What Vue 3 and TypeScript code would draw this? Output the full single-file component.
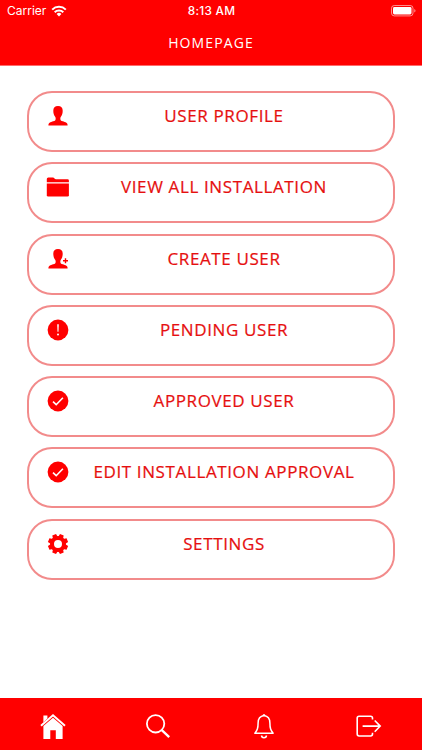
<script setup lang="ts">
type IconName = 'person' | 'folder' | 'personAdd' | 'alert' | 'check' | 'gear'

interface MenuItem {
  label: string
  icon: IconName
}

const items: MenuItem[] = [
  { label: 'USER PROFILE', icon: 'person' },
  { label: 'VIEW ALL INSTALLATION', icon: 'folder' },
  { label: 'CREATE USER', icon: 'personAdd' },
  { label: 'PENDING USER', icon: 'alert' },
  { label: 'APPROVED USER', icon: 'check' },
  { label: 'EDIT INSTALLATION APPROVAL', icon: 'check' },
  { label: 'SETTINGS', icon: 'gear' },
]

const teeth: number[] = [0, 45, 90, 135, 180, 225, 270, 315]

const personPath =
  'M12 2.1C8.900 2.1 7.200 3.900 7.300 6.700C7.300 9.400 8 11.500 9.300 13C9.800 13.700 9.800 15.400 9.300 16.200C8.500 17.400 4.200 17.600 3 19.200C2.500 19.800 2.400 20.600 2.400 21.500H21.600C21.600 20.600 21.500 19.800 21 19.200C19.800 17.600 15.500 17.400 14.700 16.200C14.200 15.400 14.200 13.700 14.700 13C16 11.500 16.700 9.400 16.700 6.700C16.800 3.900 15.100 2.100 12 2.100Z'
</script>

<template>
  <div class="screen">
    <header class="header">
      <div class="status">
        <div class="carrier">
          <span>Carrier</span>
          <svg class="wifi" viewBox="0 0 16 12" width="16" height="12">
            <g fill="none" stroke="#fff" stroke-width="2">
              <path d="M1.2 4.6A9.7 9.7 0 0 1 14.8 4.6" />
              <path d="M3.7 7.2A6.1 6.1 0 0 1 12.3 7.2" />
            </g>
            <path d="M5.6 8.9A3.4 3.4 0 0 1 10.4 8.9L8 11.4Z" fill="#fff" />
          </svg>
        </div>
        <div class="time">8:13 AM</div>
        <div class="power">
          <svg viewBox="0 0 26 12" width="26" height="12">
            <rect x="0.5" y="0.5" width="21.5" height="10.4" rx="2.8" fill="none" stroke="#fff" stroke-opacity="0.55" />
            <rect x="2" y="2" width="18.5" height="7.4" rx="1.4" fill="#fff" />
            <path d="M23.3 4V7.6Q24.5 7 24.5 5.8T23.3 4Z" fill="#fff" fill-opacity="0.6" />
          </svg>
        </div>
      </div>
      <h1 class="title">HOMEPAGE</h1>
    </header>

    <main class="menu">
      <button v-for="item in items" :key="item.label" class="item" type="button">
        <svg class="icon" viewBox="0 0 24 24" width="24" height="24" fill="currentColor">
          <path v-if="item.icon === 'person'" :d="personPath" />
          <g v-else-if="item.icon === 'folder'">
            <path d="M.8 7.2V4.1Q.8 2.6 2.3 2.6H6.9Q7.9 2.6 8.5 3.4T10 4.2H21.5Q22.9 4.2 22.9 5.6V7.2Z" />
            <path d="M.8 8.5H22.9V20.2Q22.9 21.6 21.5 21.6H2.2Q.8 21.6 .8 20.2Z" />
          </g>
          <g v-else-if="item.icon === 'personAdd'">
            <path :d="personPath" />
            <path d="M18.8 11.2h1.400v1.800h1.800v1.400h-1.800v1.800h-1.400v-1.800h-1.800v-1.400h1.800z" />
          </g>
          <g v-else-if="item.icon === 'alert'">
            <circle cx="12" cy="12" r="10.4" />
            <path d="M11.2 6.2h1.600l-.3 7.600h-1z" fill="#fff" />
            <circle cx="12" cy="16.400" r="1" fill="#fff" />
          </g>
          <g v-else-if="item.icon === 'check'">
            <circle cx="12" cy="12" r="10.4" />
            <path d="M7 12.7l3.200 3 6.700-7" fill="none" stroke="#fff" stroke-width="1.600" />
          </g>
          <g v-else>
            <circle cx="12" cy="12" r="6" fill="none" stroke="currentColor" stroke-width="4" />
            <path
              v-for="angle in teeth"
              :key="angle"
              d="M9.400 5.500L10 1.900H14L14.600 5.500Z"
              :transform="`rotate(${angle + 22.5} 12 12)`"
            />
          </g>
        </svg>
        <span class="label">{{ item.label }}</span>
      </button>
    </main>

    <nav class="tabs">
      <a class="tab" aria-label="Home">
        <svg viewBox="0 0 28 28" width="28" height="28" fill="#fff">
          <path d="M4.4 3.5h4v3.1L4.4 10.2Z" />
          <path d="M2 13.7L14 3.3 26 13.7" fill="none" stroke="#fff" stroke-width="2" />
          <path d="M4.4 14.1L14 5.8l9.6 8.3V27h-6.8v-8.8h-5.5V27H4.4Z" />
        </svg>
      </a>
      <a class="tab" aria-label="Search">
        <svg viewBox="0 0 28 28" width="28" height="28" fill="none" stroke="#fff" stroke-width="1.8">
          <circle cx="11.6" cy="11.8" r="8.7" />
          <path d="M17.8 18.1L25.2 25.2" stroke-width="2.3" />
        </svg>
      </a>
      <a class="tab" aria-label="Notifications">
        <svg viewBox="0 0 28 28" width="28" height="28" fill="none" stroke="#fff" stroke-width="1.5">
          <path
            d="M14 3.6C10.3 4.2 8.1 6.9 8.1 11c0 5.600-.9 7-3.200 10.300h18.200C20.800 18 19.900 16.600 19.900 11c0-4.100-2.200-6.800-5.900-7.400z"
            stroke-linejoin="round"
          />
          <path d="M12.8 3.7a1.2 1.3 0 0 1 2.4 0z" fill="#fff" stroke-width="0.6" />
          <path d="M11.6 23.6a2.4 2.1 0 0 0 4.8 0" stroke-width="1.6" />
        </svg>
      </a>
      <a class="tab" aria-label="Log out">
        <svg viewBox="0 0 28 28" width="28" height="28" fill="none" stroke="#fff" stroke-width="1.6">
          <path d="M17.5 7.4V6.1Q17.5 4.2 15.6 4.2H4.1Q2.2 4.2 2.2 6.1V22.1Q2.2 24 4.1 24H15.6Q17.5 24 17.5 22.1V20.8" />
          <path d="M7.6 14.1H25.1M19.7 8.5L25.2 14.1 19.7 19.7" />
        </svg>
      </a>
    </nav>
  </div>
</template>

<style>
body {
  margin: 0;
  background: #fff;
}
</style>

<style scoped>
.screen {
  display: flex;
  flex-direction: column;
  height: 750px;
  background: #fff;
  font-family: 'Open Sans', 'Noto Sans', sans-serif;
}

.header {
  box-sizing: border-box;
  height: 66px;
  background: #f00;
  border-bottom: 1px solid #ff6b6b;
  color: #fff;
}

.status {
  display: grid;
  grid-template-columns: 1fr auto 1fr;
  height: 22px;
  padding: 0 6px 0 7px;
  align-items: center;
  font-family: Inter, 'Liberation Sans', sans-serif;
  font-size: 12px;
  line-height: 22px;
}

.carrier {
  display: flex;
  align-items: center;
  gap: 5px;
}

.time {
  font-weight: 500;
  font-size: 11.8px;
  letter-spacing: 0.3px;
}

.power {
  display: flex;
  justify-content: flex-end;
  margin-right: -1px;
}

.title {
  margin: 0;
  font-size: 14px;
  font-weight: 400;
  line-height: 42px;
  letter-spacing: 1.1px;
  text-align: center;
}

.menu {
  display: flex;
  flex: 1;
  flex-direction: column;
  gap: 10.3px;
  padding: 25px 27px 0;
}

.item {
  box-sizing: border-box;
  display: grid;
  grid-template-columns: 24px 1fr;
  align-items: start;
  width: 100%;
  height: 61px;
  padding: 11px 16px 0 17px;
  border: 2px solid #f28b8b;
  border-radius: 25px;
  background: #fff;
  color: #f00;
  font-family: inherit;
}

.icon {
  display: block;
}

.label {
  margin-right: -1px;
  color: #e60f0f;
  font-size: 17px;
  line-height: 24px;
  letter-spacing: 0.62px;
  text-align: center;
  white-space: nowrap;
  -webkit-text-stroke: 0.2px #e60f0f;
}

.tabs {
  box-sizing: border-box;
  display: grid;
  grid-template-columns: repeat(4, 1fr);
  height: 52px;
  background: #f00;
}

.tab {
  display: flex;
  align-items: center;
  justify-content: center;
  padding-top: 3px;
}
</style>
